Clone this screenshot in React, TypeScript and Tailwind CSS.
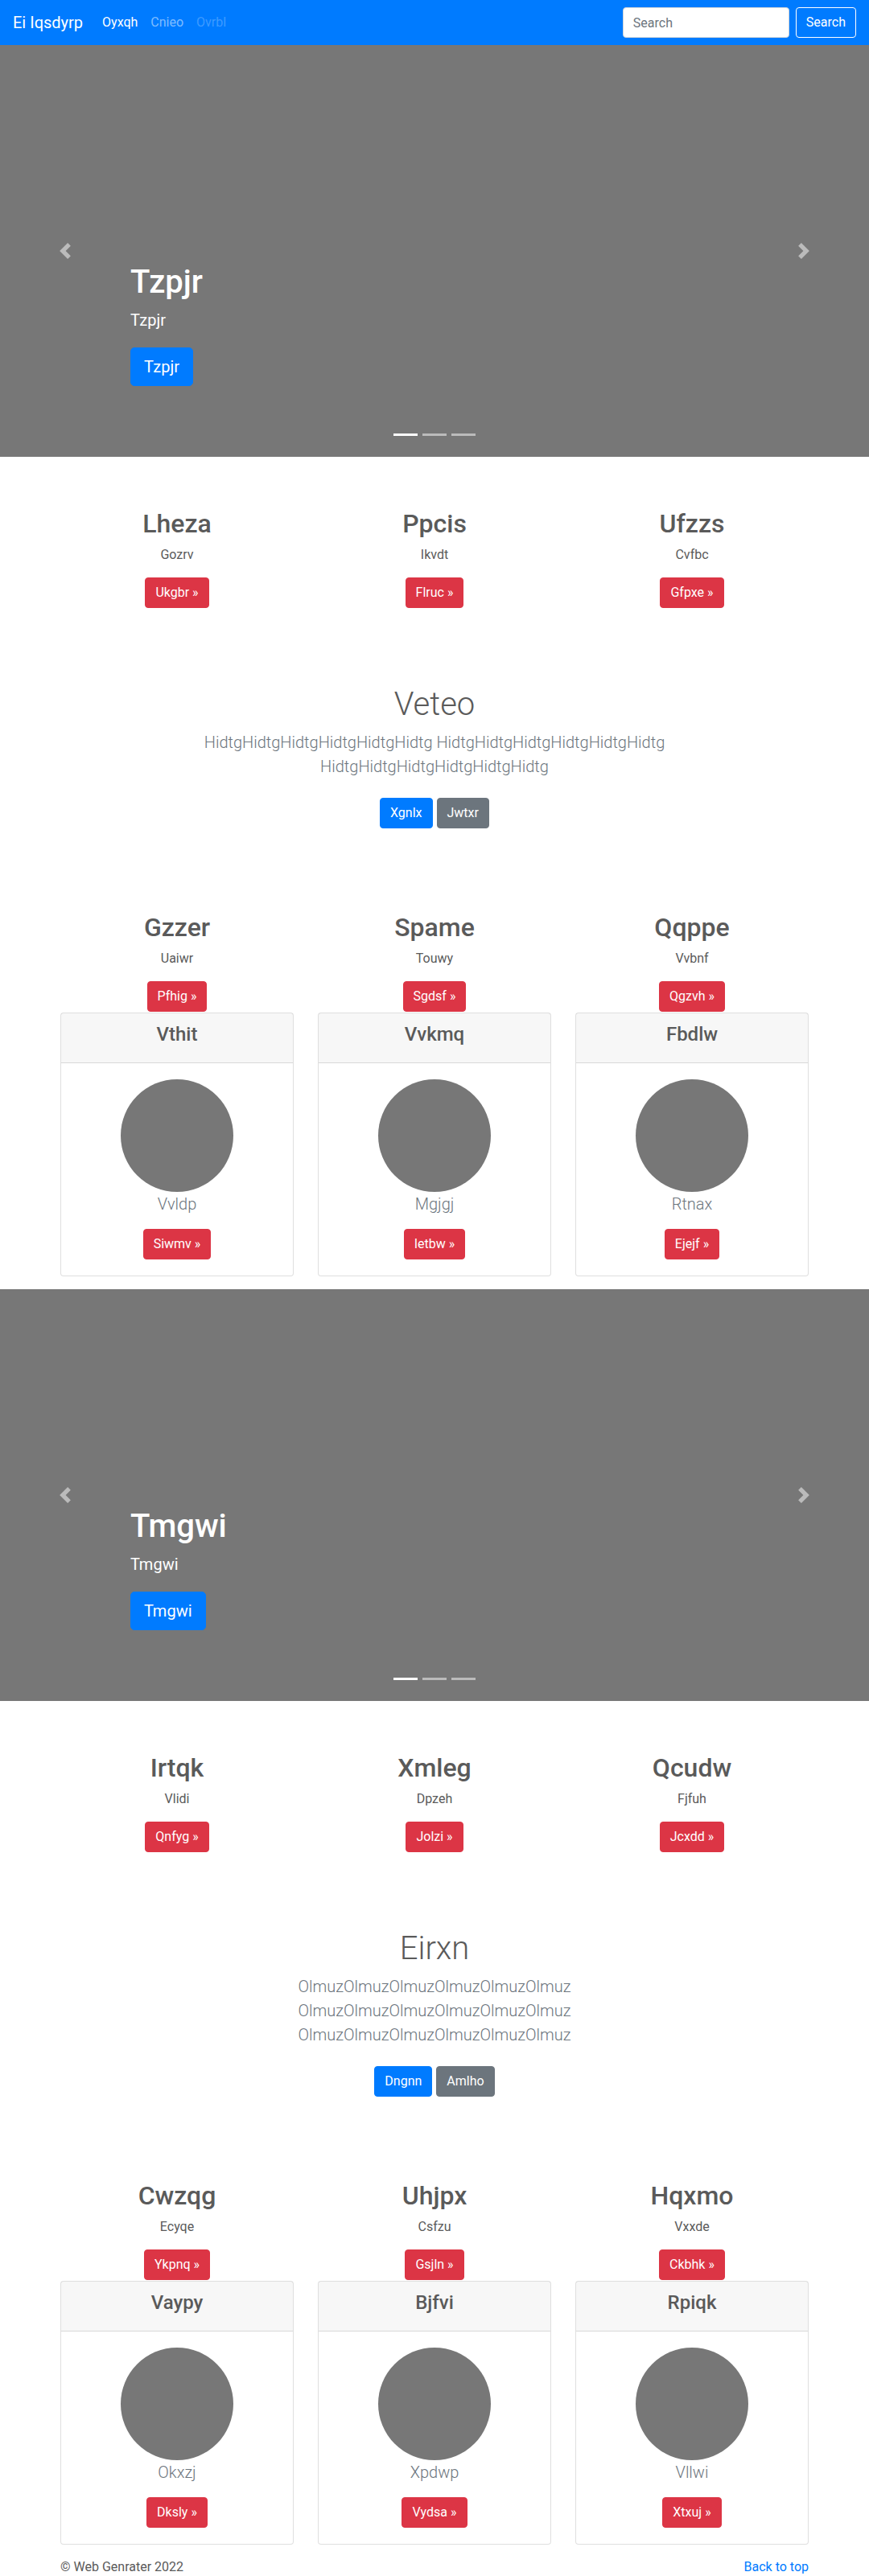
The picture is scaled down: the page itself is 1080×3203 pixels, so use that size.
import React from 'react';

type Col = { title: string; sub: string; btn: string };
type CardData = { title: string; text: string; btn: string };

function PrevIcon() {
  return (
    <svg width="20" height="20" viewBox="0 0 8 8" fill="#fff">
      <path d="M5.25 0l-4 4 4 4 1.5-1.5L4.25 4l2.5-2.5L5.25 0z" />
    </svg>
  );
}

function NextIcon() {
  return (
    <svg width="20" height="20" viewBox="0 0 8 8" fill="#fff">
      <path d="M2.75 0l-1.5 1.5L3.75 4l-2.5 2.5L2.75 8l4-4-4-4z" />
    </svg>
  );
}

function Navbar() {
  return (
    <nav className="h-14 bg-[#007bff] px-4 flex items-center">
      <a className="text-white text-xl leading-[30px] mr-4">Ei Iqsdyrp</a>
      <ul className="flex items-center">
        <li className="px-2 text-white">Oyxqh</li>
        <li className="px-2 text-white/50">Cnieo</li>
        <li className="px-2 text-white/25">Ovrbl</li>
      </ul>
      <form className="ml-auto flex items-center">
        <input
          placeholder="Search"
          className="w-[207px] h-[38px] bg-white border border-[#ced4da] rounded px-3 text-base text-[#495057] placeholder:text-[#6c757d] mr-2 outline-none"
        />
        <button type="button" className="h-[38px] px-3 border border-white rounded text-white text-base">
          Search
        </button>
      </form>
    </nav>
  );
}

function Carousel({ title }: { title: string }) {
  return (
    <div className="relative h-[512px] bg-[#777] mb-16">
      <div className="absolute left-[162px] right-[162px] bottom-12 py-5 text-white">
        <h1 className="text-[40px] leading-[48px] font-medium mb-2">{title}</h1>
        <p className="text-xl leading-[30px] mb-[19px]">{title}</p>
        <div className="flex mb-5">
          <a className="bg-[#007bff] border border-[#007bff] text-white text-xl leading-[30px] px-4 py-2 rounded-[5px]">
            {title}
          </a>
        </div>
      </div>
      <div className="absolute left-0 top-0 bottom-0 w-[162px] flex items-center justify-center opacity-50">
        <PrevIcon />
      </div>
      <div className="absolute right-0 top-0 bottom-0 w-[162px] flex items-center justify-center opacity-50">
        <NextIcon />
      </div>
      <div className="absolute bottom-[26px] left-0 right-0 flex justify-center gap-[6px]">
        <span className="w-[30px] h-[3px] bg-white" />
        <span className="w-[30px] h-[3px] bg-white/50" />
        <span className="w-[30px] h-[3px] bg-white/50" />
      </div>
    </div>
  );
}

function RedButton({ label }: { label: string }) {
  return (
    <a className="inline-block bg-[#dc3545] border border-[#dc3545] text-white text-base leading-6 px-3 py-[6px] rounded">
      {label} &raquo;
    </a>
  );
}

function Marketing({ cols }: { cols: Col[] }) {
  return (
    <div className="mx-auto max-w-[960px] px-[15px]">
      <div className="grid grid-cols-3 gap-[30px]">
        {cols.map((c) => (
          <div key={c.title} className="text-center">
            <h2 className="text-[32px] leading-[38px] font-medium mb-2">{c.title}</h2>
            <p className="text-base leading-6 mb-4">{c.sub}</p>
            <RedButton label={c.btn} />
          </div>
        ))}
      </div>
    </div>
  );
}

function Jumbotron({ title, words, primary, secondary }: { title: string; words: string[]; primary: string; secondary: string }) {
  return (
    <section className="pt-24 pb-24 text-center">
      <div className="mx-auto max-w-[640px] px-[15px]">
        <h1 className="text-[40px] leading-[48px] font-light mb-2">{title}</h1>
        <p className="text-xl leading-[30px] font-light text-[#6c757d] mb-4">{words.join(' ')}</p>
        <p className="flex justify-center gap-[5px] py-2">
          <a className="bg-[#007bff] border border-[#007bff] text-white leading-6 px-3 py-[6px] rounded">{primary}</a>
          <a className="bg-[#6c757d] border border-[#6c757d] text-white leading-6 px-3 py-[6px] rounded">{secondary}</a>
        </p>
      </div>
    </section>
  );
}

function Cards({ cards }: { cards: CardData[] }) {
  return (
    <div className="mx-auto max-w-[960px] px-[15px] mt-px mb-4">
      <div className="grid grid-cols-3 gap-[30px]">
        {cards.map((c) => (
          <div key={c.title} className="border border-black/[0.125] rounded bg-white">
            <div className="bg-black/[0.03] border-b border-black/[0.125] py-3 px-5 text-center">
              <h4 className="text-2xl leading-[29px] font-medium mb-2">{c.title}</h4>
            </div>
            <div className="p-5 flex flex-col items-center text-center">
              <div className="w-[140px] h-[140px] rounded-full bg-[#777]" />
              <p className="text-xl leading-[30px] font-light text-[#6c757d] mb-4">{c.text}</p>
              <RedButton label={c.btn} />
            </div>
          </div>
        ))}
      </div>
    </div>
  );
}

export default function App() {
  const hidtg = 'HidtgHidtgHidtgHidtgHidtgHidtg';
  const olmuz = 'OlmuzOlmuzOlmuzOlmuzOlmuzOlmuz';
  return (
    <main className="min-h-screen bg-white text-[#5a5a5a] font-['Segoe_UI',Roboto,'Helvetica_Neue',Arial,sans-serif]">
      <Navbar />

      <Carousel title="Tzpjr" />
      <Marketing
        cols={[
          { title: 'Lheza', sub: 'Gozrv', btn: 'Ukgbr' },
          { title: 'Ppcis', sub: 'Ikvdt', btn: 'Flruc' },
          { title: 'Ufzzs', sub: 'Cvfbc', btn: 'Gfpxe' },
        ]}
      />
      <Jumbotron title="Veteo" words={[hidtg, hidtg, hidtg]} primary="Xgnlx" secondary="Jwtxr" />
      <Marketing
        cols={[
          { title: 'Gzzer', sub: 'Uaiwr', btn: 'Pfhig' },
          { title: 'Spame', sub: 'Touwy', btn: 'Sgdsf' },
          { title: 'Qqppe', sub: 'Vvbnf', btn: 'Qgzvh' },
        ]}
      />
      <Cards
        cards={[
          { title: 'Vthit', text: 'Vvldp', btn: 'Siwmv' },
          { title: 'Vvkmq', text: 'Mgjgj', btn: 'Ietbw' },
          { title: 'Fbdlw', text: 'Rtnax', btn: 'Ejejf' },
        ]}
      />

      <Carousel title="Tmgwi" />
      <Marketing
        cols={[
          { title: 'Irtqk', sub: 'Vlidi', btn: 'Qnfyg' },
          { title: 'Xmleg', sub: 'Dpzeh', btn: 'Jolzi' },
          { title: 'Qcudw', sub: 'Fjfuh', btn: 'Jcxdd' },
        ]}
      />
      <Jumbotron title="Eirxn" words={[olmuz, olmuz, olmuz]} primary="Dngnn" secondary="Amlho" />
      <Marketing
        cols={[
          { title: 'Cwzqg', sub: 'Ecyqe', btn: 'Ykpnq' },
          { title: 'Uhjpx', sub: 'Csfzu', btn: 'Gsjln' },
          { title: 'Hqxmo', sub: 'Vxxde', btn: 'Ckbhk' },
        ]}
      />
      <Cards
        cards={[
          { title: 'Vaypy', text: 'Okxzj', btn: 'Dksly' },
          { title: 'Bjfvi', text: 'Xpdwp', btn: 'Vydsa' },
          { title: 'Rpiqk', text: 'Vllwi', btn: 'Xtxuj' },
        ]}
      />

      <footer className="mx-auto max-w-[960px] px-[15px] flex justify-between text-base leading-6 pb-4">
        <p>&copy; Web Genrater 2022</p>
        <a className="text-[#007bff]">Back to top</a>
      </footer>
    </main>
  );
}
